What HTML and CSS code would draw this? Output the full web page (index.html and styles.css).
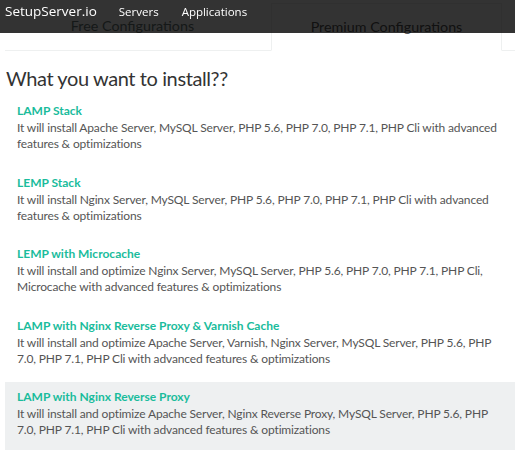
FILE: index.html
```html
<!DOCTYPE html>
<html lang="en">
<head>
    <meta charset="UTF-8">
    <meta name="viewport" content="width=device-width, initial-scale=1.0">
    <title>SetupServer.io</title>
    <link rel="stylesheet" href="styles.css">
</head>
<body>

<nav class="navbar">
    <a href="#" class="brand">SetupServer.io</a>
    <a href="#" class="nav-link">Servers</a>
    <a href="#" class="nav-link">Applications</a>
</nav>

<div class="container">
    <ul class="tabs">
        <li class="tab">Free Configurations</li>
        <li class="tab active">Premium Configurations</li>
    </ul>

    <h2 class="title">What you want to install??</h2>

    <div class="list">
        <div class="item">
            <a href="#" class="item-name">LAMP Stack</a>
            <p>It will install Apache Server, MySQL Server, PHP 5.6, PHP 7.0, PHP 7.1, PHP Cli with advanced features &amp; optimizations</p>
        </div>
        <div class="item">
            <a href="#" class="item-name">LEMP Stack</a>
            <p>It will install Nginx Server, MySQL Server, PHP 5.6, PHP 7.0, PHP 7.1, PHP Cli with advanced features &amp; optimizations</p>
        </div>
        <div class="item">
            <a href="#" class="item-name">LEMP with Microcache</a>
            <p>It will install and optimize Nginx Server, MySQL Server, PHP 5.6, PHP 7.0, PHP 7.1, PHP Cli, Microcache with advanced features &amp; optimizations</p>
        </div>
        <div class="item">
            <a href="#" class="item-name">LAMP with Nginx Reverse Proxy &amp; Varnish Cache</a>
            <p>It will install and optimize Apache Server, Varnish, Nginx Server, MySQL Server, PHP 5.6, PHP 7.0, PHP 7.1, PHP Cli with advanced features &amp; optimizations</p>
        </div>
        <div class="item hover">
            <a href="#" class="item-name">LAMP with Nginx Reverse Proxy</a>
            <p>It will install and optimize Apache Server, Nginx Reverse Proxy, MySQL Server, PHP 5.6, PHP 7.0, PHP 7.1, PHP Cli with advanced features &amp; optimizations</p>
        </div>
    </div>
</div>

</body>
</html>
```

FILE: styles.css
```css
body {
    font-family: Lato, "Open Sans", sans-serif;
    margin: 0;
    padding: 0;
    background-color: #fff;
    color: #555;
}
.navbar {
    position: fixed;
    top: 0;
    left: 0;
    right: 0;
    height: 33px;
    box-sizing: border-box;
    display: flex;
    align-items: baseline;
    padding: 2px 5px 0;
    background-color: rgba(0, 0, 0, 0.8);
    font-family: "Open Sans", sans-serif;
    z-index: 10;
}
.navbar a {
    color: #fff;
    text-decoration: none;
    line-height: 18px;
}
.brand {
    font-size: 13.5px;
    margin-right: 22px;
}
.nav-link {
    font-size: 11.5px;
    margin-right: 23px;
}
.container {
    padding-left: 5px;
}
.tabs {
    list-style: none;
    margin: 0;
    padding: 3px 0 0;
    display: flex;
    border-bottom: 1px solid #eef0f0;
}
.tab {
    width: 255px;
    padding: 13px 11px 13px 0;
    line-height: 20px;
    text-align: center;
    font-size: 14.3px;
    color: #6a7a78;
    margin-bottom: -1px;
    border-bottom: 1px solid #eef0f0;
}
.tab.active {
    width: 229px;
    padding-right: 0;
    color: #555;
    border: 1px solid #eef0f0;
    border-bottom-color: #fff;
    background-color: #fff;
}
.title {
    font-size: 20px;
    line-height: 24px;
    letter-spacing: -0.4px;
    font-weight: normal;
    color: #333;
    margin: 15px 0 6px 1px;
}
.item {
    padding: 6px 12px 15.5px 12px;
}
.item.hover {
    background-color: #eef0f1;
}
.item-name {
    display: block;
    color: #1abc9c;
    font-weight: bold;
    font-size: 12px;
    line-height: 18px;
    text-decoration: none;
}
.item p {
    margin: 0;
    font-size: 12px;
    line-height: 16px;
    letter-spacing: -0.15px;
}
```
